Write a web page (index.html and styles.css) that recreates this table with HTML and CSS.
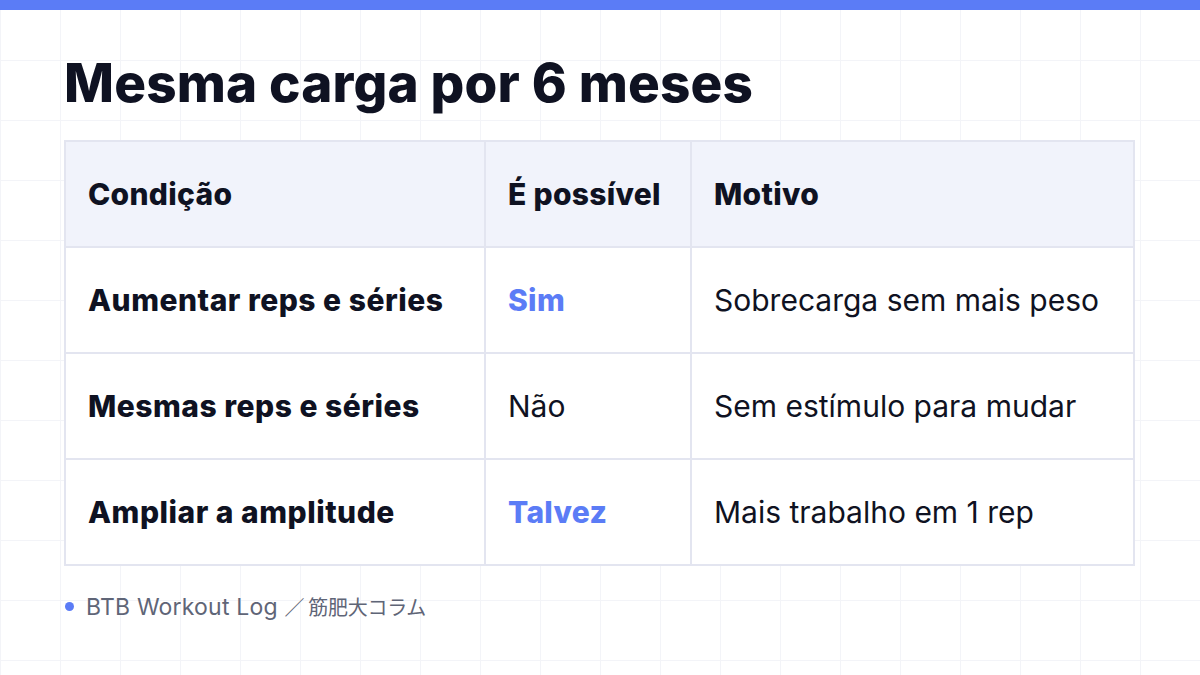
FILE: index.html
```html
<!DOCTYPE html>
<html lang="pt">
<head>
<meta charset="utf-8">
<link rel="stylesheet" href="styles.css">
</head>
<body>
<div class="topbar"></div>
<main class="slide">
  <h1 class="title">Mesma carga por 6 meses</h1>
  <table class="grid-table">
    <colgroup>
      <col class="c1"><col class="c2"><col class="c3">
    </colgroup>
    <thead>
      <tr><th>Condição</th><th>É possível</th><th>Motivo</th></tr>
    </thead>
    <tbody>
      <tr><td class="cond">Aumentar reps e séries</td><td class="accent">Sim</td><td>Sobrecarga sem mais peso</td></tr>
      <tr><td class="cond">Mesmas reps e séries</td><td>Não</td><td>Sem estímulo para mudar</td></tr>
      <tr><td class="cond">Ampliar a amplitude</td><td class="accent">Talvez</td><td>Mais trabalho em 1 rep</td></tr>
    </tbody>
  </table>
  <footer class="footer"><span class="dot"></span><span class="footer-text">BTB Workout Log <span class="cjk">／ 筋肥大コラム</span></span></footer>
</main>
</body>
</html>
```
FILE: styles.css
```css
html, body {
  margin: 0;
  padding: 0;
}
body {
  width: 1200px;
  height: 675px;
  overflow: hidden;
  font-family: Inter, "Noto Sans CJK JP", sans-serif;
  color: #0f1222;
  background-color: #ffffff;
  background-image:
    linear-gradient(to right, #f3f4f8 1px, transparent 1px),
    linear-gradient(to bottom, #f3f4f8 1px, transparent 1px);
  background-size: 60px 60px;
  background-position: 0 0;
}
.topbar {
  height: 10px;
  background: #5b7cf6;
}
.slide {
  padding: 0 64px;
}
.title {
  margin: 0;
  padding-top: 41px;
  font-size: 53px;
  line-height: 64px;
  font-weight: 800;
  letter-spacing: 0.15px;
  color: #0f1222;
}
.grid-table {
  margin-top: 25px;
  width: 1069px;
  border-collapse: collapse;
  table-layout: fixed;
  background: #ffffff;
}
.c1 { width: 420px; }
.c2 { width: 206px; }
.c3 { width: 443px; }
.grid-table th,
.grid-table td {
  border: 2px solid #e3e5f0;
  height: 104px;
  padding: 0 0 0 22px;
  text-align: left;
  font-size: 30px;
  vertical-align: middle;
  white-space: nowrap;
}
.grid-table th {
  background: #f1f3fb;
  font-weight: 800;
  letter-spacing: 0.3px;
}
.grid-table td {
  font-weight: 400;
  background: rgba(255,255,255,0.6);
}
.grid-table td.cond {
  font-weight: 800;
  letter-spacing: 0.5px;
}
.grid-table td.accent {
  color: #5b7cf6;
  font-weight: 800;
  letter-spacing: 0.3px;
}
.footer {
  display: flex;
  align-items: center;
  gap: 12px;
  margin-top: 26px;
  padding-left: 1px;
  font-size: 23px;
  color: #5f6577;
}
.footer-text {
  letter-spacing: 0.2px;
}
.cjk {
  font-size: 20px;
  letter-spacing: -0.3px;
  font-family: "Noto Sans CJK JP", sans-serif;
}
.dot {
  width: 9px;
  height: 9px;
  border-radius: 50%;
  background: #5b7cf6;
}
```
